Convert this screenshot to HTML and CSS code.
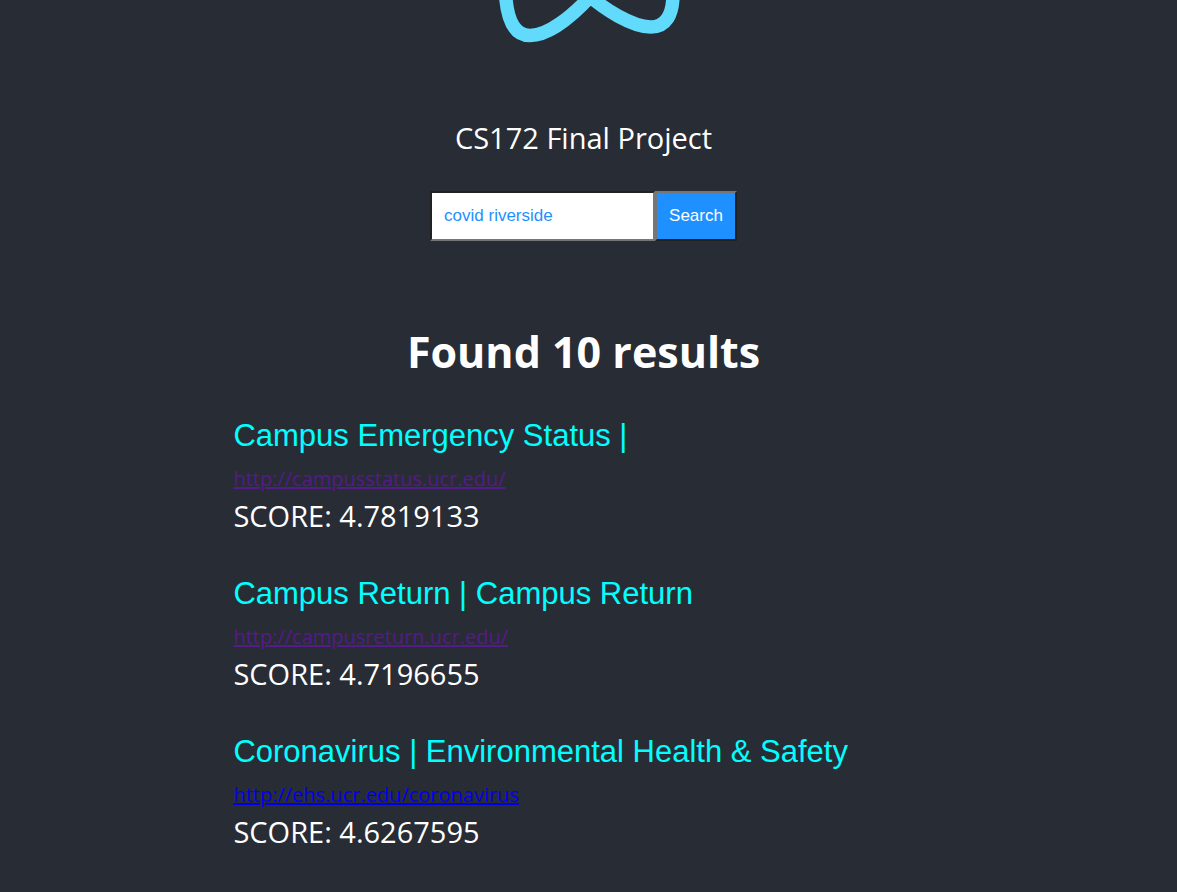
FILE: index.html
```html
<!DOCTYPE html>
<html lang="en">
<head>
<meta charset="utf-8">
<title>CS172 Final Project</title>
<link rel="stylesheet" href="styles.css">
</head>
<body>
<main class="app">
  <svg class="logo" viewBox="474 0 220 60" width="220" height="60" fill="none" stroke="#61dafb" stroke-width="13.5" aria-hidden="true">
    <path d="M505.500 -6C507 18 514 35.500 530 35.500C547 35.500 571 19 598 -12"/>
    <path d="M576 -16C605 12 634 27 651 27C666 27 673 15 673 -6"/>
  </svg>
  <p class="heading">CS172 Final Project</p>
  <form class="search">
    <input class="query" type="text" aria-label="Search query" value="covid riverside">
    <button class="submit" type="button">Search</button>
  </form>
  <h1 class="count">Found 10 results</h1>
  <section class="results">
    <article class="result">
      <h2 class="title">Campus Emergency Status |</h2>
      <a class="link visited" href="#">http://campusstatus.ucr.edu/</a>
      <p class="score">SCORE: 4.7819133</p>
    </article>
    <article class="result">
      <h2 class="title">Campus Return | Campus Return</h2>
      <a class="link visited" href="#">http://campusreturn.ucr.edu/</a>
      <p class="score">SCORE: 4.7196655</p>
    </article>
    <article class="result">
      <h2 class="title">Coronavirus | Environmental Health &amp; Safety</h2>
      <a class="link" href="#">http://ehs.ucr.edu/coronavirus</a>
      <p class="score">SCORE: 4.6267595</p>
    </article>
  </section>
</main>
</body>
</html>
```
FILE: styles.css
```css
* { box-sizing: border-box; }
body {
  margin: 0;
  background: #282c34;
  color: #fff;
  font-family: "Open Sans", "Noto Sans", sans-serif;
}
.app {
  display: flex;
  flex-direction: column;
  align-items: center;
  padding-right: 10px;
}
.logo { display: block; }
.heading {
  margin: 57px 0 0;
  font-size: 29px;
  line-height: 42px;
}
.search {
  display: flex;
  margin-top: 32px;
}
.query, .submit {
  height: 50px;
  border: 2px solid;
  border-radius: 0;
  padding: 0 12px;
  font: 17px "Liberation Sans", Arial, sans-serif;
}
.query {
  width: 225px;
  border-color: #212121 #767676 #767676 #212121;
  background: #fff;
  color: #1e90ff;
}
.submit {
  border-color: #767676 #212121 #212121 #767676;
  background: #1e90ff;
  color: #fff;
}
.count {
  margin: 80px 0 0;
  font-size: 43px;
  line-height: 62px;
}
.results {
  display: flex;
  flex-direction: column;
  width: 60%;
  gap: 38px;
  margin-top: 33px;
}
.result {
  display: flex;
  flex-direction: column;
  align-items: flex-start;
}
.title {
  margin: 0;
  font: 31px/40px "Liberation Sans", Arial, sans-serif;
  color: #0ff;
}
.link {
  margin-top: 7px;
  font-size: 20px;
  line-height: 32px;
  color: #00e;
}
.visited { color: #551a8b; }
.score {
  margin: 1px 0 0;
  font-size: 29px;
  line-height: 40px;
}
```
